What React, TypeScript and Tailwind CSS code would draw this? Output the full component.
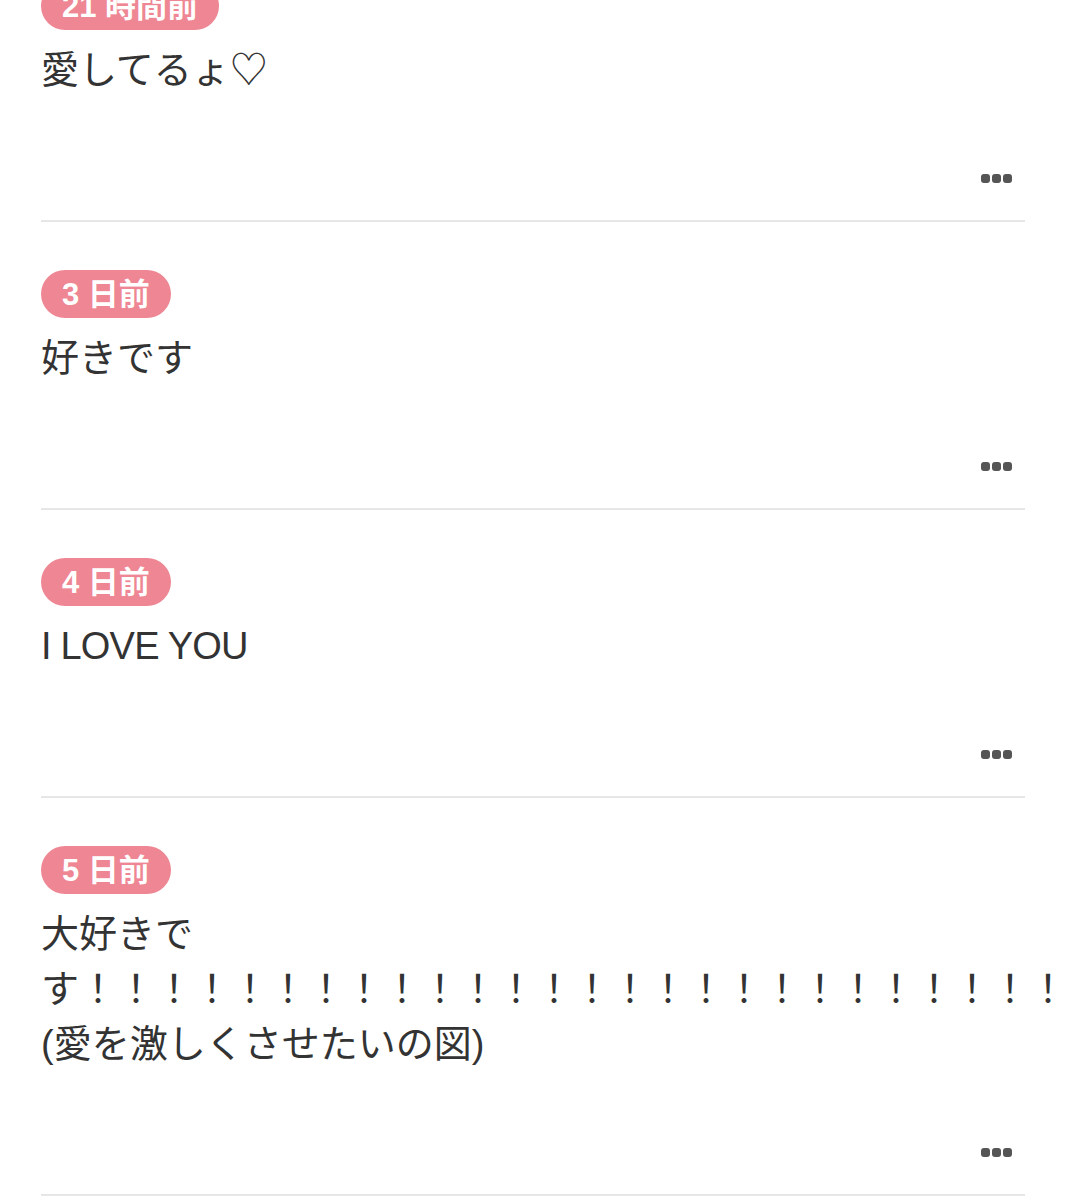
const posts = [
  { id: 1, ago: '21 時間前', body: ['愛してるょ♡'] },
  { id: 2, ago: '3 日前', body: ['好きです'] },
  { id: 3, ago: '4 日前', body: ['I LOVE YOU'], latin: true },
  {
    id: 4,
    ago: '5 日前',
    body: ['大好きです！！！！！！！！！！！！！！！！！！！！！！！！！！', '(愛を激しくさせたいの図)'],
  },
];

function MoreDots() {
  return (
    <div className="flex justify-end pr-[13px]">
      <div className="flex gap-[2px]">
        <span className="w-[9px] h-[9px] rounded-[3px] bg-[#555]" />
        <span className="w-[9px] h-[9px] rounded-[3px] bg-[#555]" />
        <span className="w-[9px] h-[9px] rounded-[3px] bg-[#555]" />
      </div>
    </div>
  );
}

export default function App() {
  return (
    <div
      className="min-h-[1200px] bg-white overflow-hidden"
      style={{ fontFamily: '"Liberation Sans", "Noto Sans CJK JP", sans-serif' }}
    >
      <div className="mx-[41px] w-[984px] -mt-[66px]">
        {posts.map((post) => (
          <div key={post.id} className="pt-[48px] pb-[37px] border-b-2 border-[#e6e6e6]">
            {/* Time badge */}
            <span className="inline-flex items-center h-12 px-[21px] rounded-full bg-[#ee8693] text-white text-[31px] font-bold leading-none">
              {post.ago}
            </span>

            {/* Body */}
            <div
              className={`mt-[13px] text-[38px] leading-[55px] text-[#333] ${post.latin ? 'tracking-[-0.8px]' : ''}`}
            >
              {post.body.map((line, i) => (
                <div key={i}>{line}</div>
              ))}
            </div>

            <div className="mt-[76px]">
              <MoreDots />
            </div>
          </div>
        ))}
      </div>
    </div>
  );
}
